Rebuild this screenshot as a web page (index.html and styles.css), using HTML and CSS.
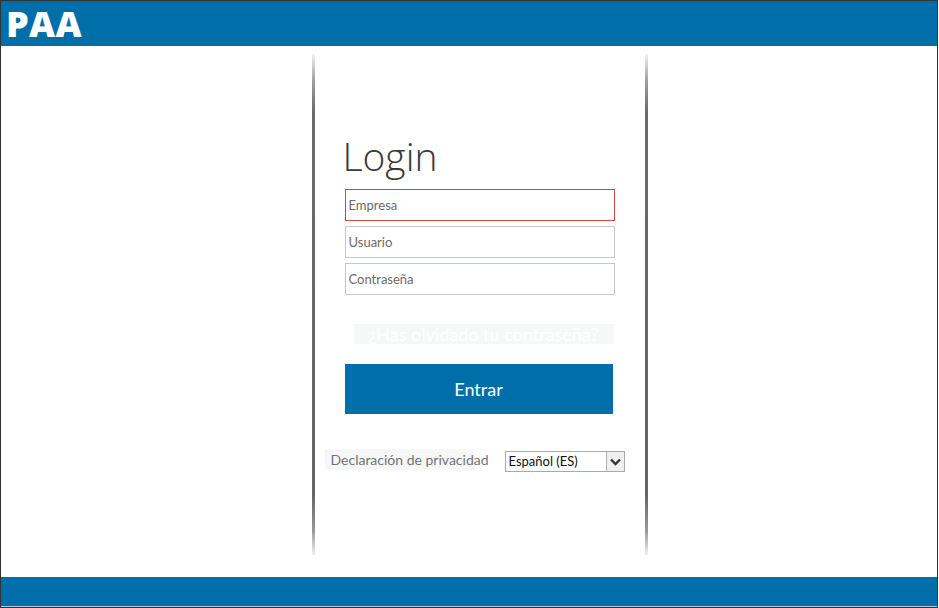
FILE: index.html
```html
<!DOCTYPE html>
<html lang="es">
<head>
<meta charset="utf-8">
<title>PAA - Login</title>
<link rel="stylesheet" href="styles.css">
</head>
<body>
<div class="frame">
  <header class="topbar"><span class="brand">PAA</span></header>
  <main class="main">
    <section class="panel">
      <h1 class="title">Login</h1>
      <form class="form">
        <input class="field field-error" type="text" placeholder="Empresa">
        <input class="field" type="text" placeholder="Usuario">
        <input class="field" type="password" placeholder="Contraseña">
        <a class="forgot" href="#">¿Has olvidado tu contraseña?</a>
        <button class="submit" type="button">Entrar</button>
      </form>
      <div class="bottom-row">
        <a class="privacy" href="#">Declaración de privacidad</a>
        <div class="lang">
          <span class="lang-value">Español (ES)</span>
          <span class="lang-arrow"><svg width="11" height="8" viewBox="0 0 11 8"><path d="M1 1.5 L5.5 6 L10 1.5" fill="none" stroke="#333" stroke-width="2.4"/></svg></span>
        </div>
      </div>
    </section>
  </main>
  <footer class="bottombar"></footer>
</div>
</body>
</html>
```
FILE: styles.css
```css
html, body {
  margin: 0;
  padding: 0;
  background: #ffffff;
}
body {
  font-family: Lato, "Open Sans", sans-serif;
  width: 939px;
  height: 608px;
  overflow: hidden;
}
.frame {
  box-sizing: border-box;
  width: 938px;
  height: 608px;
  border: 1px solid #333333;
  display: flex;
  flex-direction: column;
}
.topbar {
  height: 45px;
  background: #006ea8;
  padding-left: 5px;
  display: flex;
  align-items: center;
  flex: none;
}
.brand {
  color: #ffffff;
  font-family: "Open Sans", sans-serif;
  font-weight: 800;
  font-size: 36px;
  letter-spacing: 0.3px;
  line-height: 1;
  margin-top: 1px;
}
.main {
  flex: 1;
  display: flex;
  justify-content: center;
  padding-left: 21px;
  padding-top: 8px;
}
.panel {
  box-sizing: border-box;
  width: 336px;
  height: 501px;
  border-left: 3px solid #666;
  border-right: 3px solid #666;
  border-image: linear-gradient(to bottom, #f4f4f4 0%, #9a9a9a 6%, #6a6a6a 12%, #666 88%, #9a9a9a 95%, #f4f4f4 100%) 1;
  border-top: 0;
  border-bottom: 0;
  padding: 0 30px;
  display: flex;
  flex-direction: column;
}
.title {
  margin: 76px 0 0 -2px;
  font-family: "Open Sans", sans-serif;
  font-weight: 300;
  font-size: 39px;
  line-height: 52px;
  color: #3a3a3a;
  height: 52px;
}
.form {
  display: flex;
  flex-direction: column;
  margin-top: 7px;
}
.field {
  box-sizing: border-box;
  width: 270px;
  height: 32px;
  border: 1px solid #c3c8cd;
  margin: 0 0 5px 0;
  padding: 0 3px;
  font-family: Lato, sans-serif;
  font-size: 13px;
  color: #555;
  outline: none;
}
.field::placeholder {
  color: #6b6b6b;
}
.field-error {
  border-color: #d04a4a;
}
.forgot {
  align-self: flex-start;
  margin: 24px 0 0 9px;
  width: 260px;
  height: 20px;
  line-height: 20px;
  background: #f6f8f8;
  color: #ffffff;
  font-size: 18px;
  text-decoration: none;
  text-align: center;
  white-space: nowrap;
}
.submit {
  margin-top: 20px;
  width: 268px;
  height: 50px;
  border: 0;
  background: #006ea8;
  color: #ffffff;
  font-family: Lato, sans-serif;
  font-size: 18px;
  padding: 0;
}
.bottom-row {
  display: flex;
  align-items: flex-start;
  margin: 35px 0 0 -20px;
  width: 300px;
  justify-content: space-between;
}
.privacy {
  display: block;
  background: #f6f8f8;
  color: #737373;
  font-size: 14px;
  text-decoration: none;
  height: 21px;
  line-height: 21px;
  padding: 0 6px;
  width: 138px;
  white-space: nowrap;
}
.lang {
  box-sizing: border-box;
  margin-top: 2px;
  width: 120px;
  height: 21px;
  border: 1px solid #a9a9a9;
  display: flex;
  align-items: stretch;
}
.lang-value {
  flex: 1;
  font-size: 13px;
  color: #111;
  line-height: 19px;
  padding-left: 3px;
}
.lang-arrow {
  width: 17px;
  background: #f0f0f0;
  border-left: 1px solid #b5b5b5;
  display: flex;
  align-items: center;
  justify-content: center;
}
.bottombar {
  flex: none;
  height: 29px;
  background: #006ea8;
  border-bottom: 1px solid #b9c9d6;
}
```
